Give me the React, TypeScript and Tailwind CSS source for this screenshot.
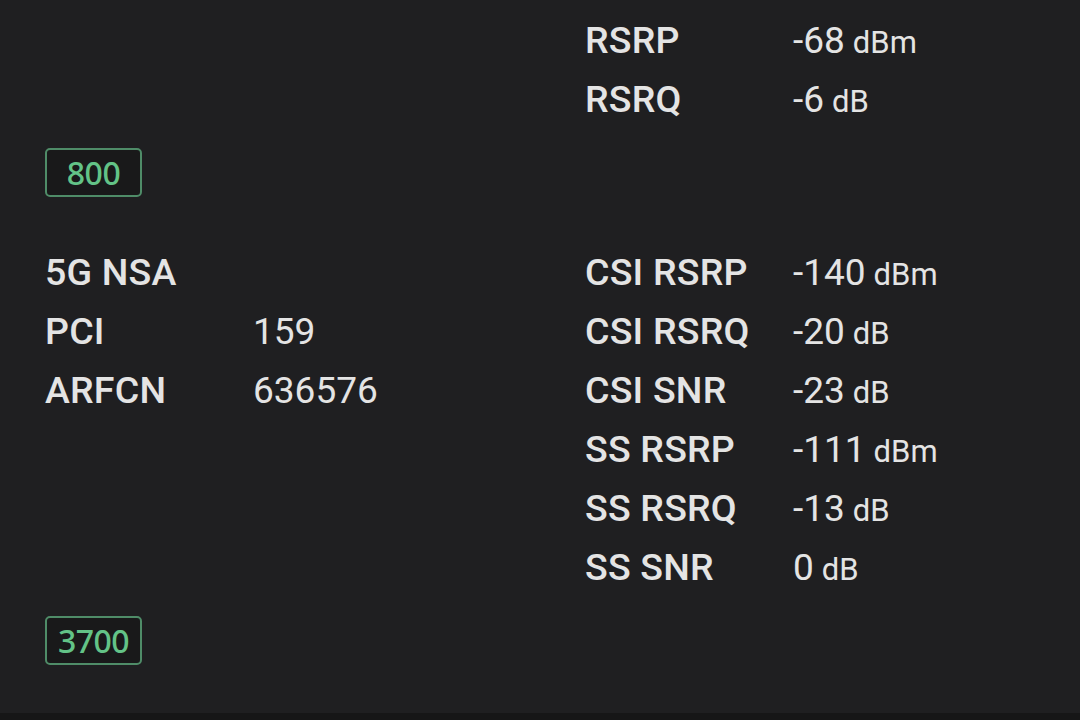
const lte = {
  left: [] as { label: string; value?: string }[],
  right: [
    { label: "RSRP", value: "-68", unit: "dBm" },
    { label: "RSRQ", value: "-6", unit: "dB" },
  ],
  band: "800",
};

const nr = {
  left: [
    { label: "5G NSA" },
    { label: "PCI", value: "159" },
    { label: "ARFCN", value: "636576" },
  ],
  right: [
    { label: "CSI RSRP", value: "-140", unit: "dBm" },
    { label: "CSI RSRQ", value: "-20", unit: "dB" },
    { label: "CSI SNR", value: "-23", unit: "dB" },
    { label: "SS RSRP", value: "-111", unit: "dBm" },
    { label: "SS RSRQ", value: "-13", unit: "dB" },
    { label: "SS SNR", value: "0", unit: "dB" },
  ],
  band: "3700",
};

type Row = { label: string; value?: string; unit?: string };

function InfoRow({ row }: { row: Row }) {
  return (
    <div className="flex h-[59px] items-center">
      <span className="w-[208px] shrink-0 text-[37.5px] font-medium tracking-[0.2px] text-[#e4e4e4]">
        {row.label}
      </span>
      {row.value && (
        <span className="text-[37px] text-[#e4e4e4]">
          {row.value}
          {row.unit && <span className="ml-[8px] text-[31px]">{row.unit}</span>}
        </span>
      )}
    </div>
  );
}

function Band({ text }: { text: string }) {
  return (
    <div className="mt-[19px] flex h-[49px] w-[97px] items-center justify-center rounded-[5px] border-2 border-[#4f8c68] bg-[#19191a] font-['Noto_Sans',sans-serif] text-[32px] font-medium leading-none tracking-[-0.5px] text-[#63c387]">
      {text}
    </div>
  );
}

function Section({ data }: { data: { left: Row[]; right: Row[]; band: string } }) {
  return (
    <section>
      <div className="grid grid-cols-[540px_1fr]">
        <div>
          {data.left.map((r) => (
            <InfoRow key={r.label} row={r} />
          ))}
        </div>
        <div>
          {data.right.map((r) => (
            <InfoRow key={r.label} row={r} />
          ))}
        </div>
      </div>
      <Band text={data.band} />
    </section>
  );
}

export default function App() {
  return (
    <div className="flex h-[720px] w-[1080px] flex-col overflow-hidden bg-[#1f1f21] font-['Roboto',sans-serif]">
      <div className="flex flex-1 flex-col gap-[46px] px-[45px] pt-[11px]">
        <Section data={lte} />
        <Section data={nr} />
      </div>
      <div className="h-[7px] bg-[#161617]" />
    </div>
  );
}
